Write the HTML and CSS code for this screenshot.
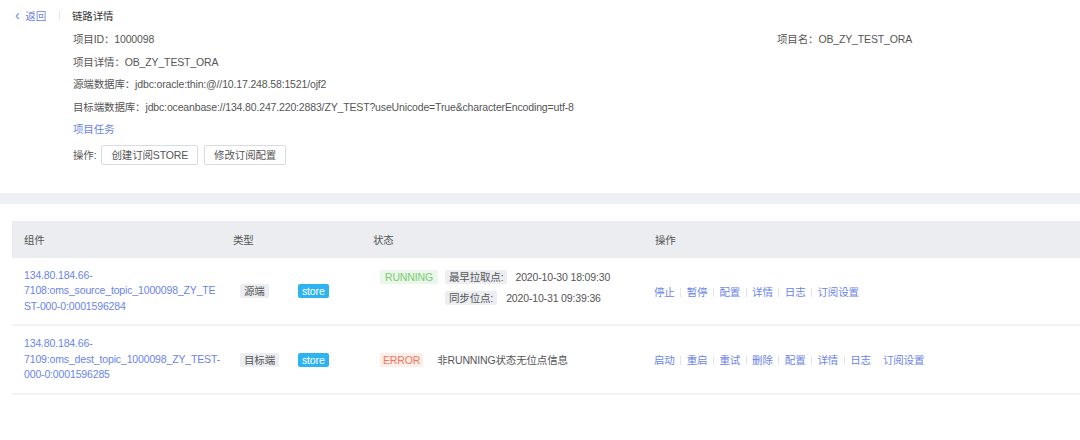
FILE: index.html
```html
<!DOCTYPE html>
<html>
  <head>
    <meta charset="UTF-8" />
    <title>链路详情</title>
    <link rel="stylesheet" href="styles.css">
  </head>
  <body>
    <div class="header">
      <div class="topbar">
        <a href="#" class="back"><span class="arrow">&lsaquo;</span> 返回</a>
        <span class="divider"></span>
        <span class="title">链路详情</span>
      </div>
      <div class="info">
        <div class="row two">
          <span>项目ID：1000098</span>
          <span>项目名：OB_ZY_TEST_ORA</span>
        </div>
        <div class="row">项目详情：OB_ZY_TEST_ORA</div>
        <div class="row">源端数据库：jdbc:oracle:thin:@//10.17.248.58:1521/ojf2</div>
        <div class="row">目标端数据库：jdbc:oceanbase://134.80.247.220:2883/ZY_TEST?useUnicode=True&amp;characterEncoding=utf-8</div>
        <div class="row"><a href="#" class="link">项目任务</a></div>
        <div class="row actions">
          <span>操作:</span><button class="btn">创建订阅STORE</button><button class="btn">修改订阅配置</button>
        </div>
      </div>
    </div>

    <div class="band"></div>

    <div class="table-wrap">
      <table class="grid">
        <thead>
          <tr>
            <th class="col-name">组件</th>
            <th class="col-type">类型</th>
            <th class="col-state">状态</th>
            <th>操作</th>
          </tr>
        </thead>
        <tbody>
          <tr>
            <td><a href="#" class="comp">134.80.184.66-7108:oms_source_topic_1000098_ZY_TEST-000-0:0001596284</a></td>
            <td>
              <div class="types">
                <span class="tag gray">源端</span>
                <span class="tag blue">store</span>
              </div>
            </td>
            <td>
              <div class="state">
                <span class="tag green">RUNNING</span>
                <div class="points">
                  <div><span class="tag gray">最早拉取点:</span><span class="val">2020-10-30 18:09:30</span></div>
                  <div><span class="tag gray">同步位点:</span><span class="val second">2020-10-31 09:39:36</span></div>
                </div>
              </div>
            </td>
            <td class="ops">
              <a href="#">停止</a><i></i><a href="#">暂停</a><i></i><a href="#">配置</a><i></i><a href="#">详情</a><i></i><a href="#">日志</a><i></i><a href="#">订阅设置</a>
            </td>
          </tr>
          <tr>
            <td><a href="#" class="comp">134.80.184.66-7109:oms_dest_topic_1000098_ZY_TEST-000-0:0001596285</a></td>
            <td>
              <div class="types">
                <span class="tag gray">目标端</span>
                <span class="tag blue">store</span>
              </div>
            </td>
            <td>
              <div class="state">
                <span class="tag red">ERROR</span>
                <span class="msg">非RUNNING状态无位点信息</span>
              </div>
            </td>
            <td class="ops">
              <a href="#">启动</a><i></i><a href="#">重启</a><i></i><a href="#">重试</a><i></i><a href="#">删除</a><i></i><a href="#">配置</a><i></i><a href="#">详情</a><i></i><a href="#">日志</a><b></b><a href="#">订阅设置</a>
            </td>
          </tr>
        </tbody>
      </table>
    </div>
  </body>
</html>
```

FILE: styles.css
```css
body {
  margin: 0;
  background: #fff;
  font-family: "Liberation Sans", "Noto Sans CJK SC", sans-serif;
  font-size: 10.5px;
  letter-spacing: -0.15px;
  color: #555;
}

a {
  text-decoration: none;
  color: #5b7cee;
}

/* Phần đầu trang */
.header {
  padding: 7px 0 0 15px;
  height: 186px;
}

.topbar {
  display: flex;
  align-items: center;
  height: 16px;
}

.back {
  color: #6a82e6;
}

.back .arrow {
  font-size: 14px;
  margin-right: 3px;
}

.divider {
  width: 1px;
  height: 10px;
  background: #e4e6ea;
  margin: 0 12px 0 13px;
}

.title {
  color: #333;
}

.info {
  margin: 8px 0 0 58px;
}

.info .row {
  height: 22.5px;
  line-height: 16px;
}

.info .two {
  display: grid;
  grid-template-columns: 704px auto;
}

.link {
  color: #6a82e6;
}

.actions {
  display: flex;
  align-items: center;
  height: 20px;
}

.actions span {
  margin-right: 5px;
}

.btn {
  font-family: inherit;
  font-size: 10.5px;
  letter-spacing: -0.15px;
  color: #555;
  background: #fff;
  border: 1px solid #d8dbe0;
  border-radius: 2px;
  height: 20px;
  padding: 0 9px;
  margin: 0 6px 0 0;
}

/* Dải phân cách màu xám */
.band {
  height: 11px;
  background: #eef0f4;
}

/* Bảng thành phần */
.table-wrap {
  padding: 17px 0 0 12px;
}

.grid {
  width: 100%;
  border-collapse: collapse;
  table-layout: fixed;
}

.grid th {
  background: #ebedf1;
  color: #555;
  font-weight: normal;
  text-align: left;
  height: 37px;
  padding: 0 12px;
}

.grid td {
  padding: 0 12px;
  vertical-align: middle;
  border-bottom: 2px solid #f1f2f5;
}

.grid tbody tr:first-child td {
  height: 66px;
}

.grid tbody tr:last-child td {
  height: 67px;
}

.col-name {
  width: 185px;
}

.col-type {
  width: 116px;
}

.col-state {
  width: 258px;
}

.comp {
  display: block;
  width: 198px;
  line-height: 15.5px;
  color: #6a84ea;
  overflow-wrap: break-word;
}

.tag {
  display: inline-block;
  height: 14px;
  line-height: 14px;
  padding: 0 4px;
  border-radius: 2px;
  white-space: nowrap;
}

.tag.gray {
  background: #eceef2;
  color: #555;
}

.tag.blue {
  background: #2db3f0;
  color: #fff;
}

.types {
  display: grid;
  grid-template-columns: 58px auto;
  justify-items: start;
  margin-left: 7px;
}

.tag.green {
  background: #eaf7ea;
  color: #79cc70;
  padding: 0 5px;
}

.tag.red {
  background: #fdeeea;
  color: #f07758;
  padding: 0 3px;
}

.state {
  display: flex;
  align-items: flex-start;
  margin-left: 7px;
  white-space: nowrap;
}

.state .tag.green {
  margin-right: 7px;
}

.points div {
  height: 21px;
}

.val {
  margin-left: 8px;
}

.val.second {
  margin-left: 9px;
}

.msg {
  margin-left: 14px;
  line-height: 14px;
}

/* Các thao tác */
.grid td.ops {
  white-space: nowrap;
  padding-left: 11px;
}

.ops a {
  color: #6a84ea;
}

.ops i {
  display: inline-block;
  width: 1px;
  height: 9px;
  background: #e2e4e8;
  margin: 0 5.5px;
  vertical-align: -1px;
}

.ops b {
  display: inline-block;
  width: 12px;
}
```
